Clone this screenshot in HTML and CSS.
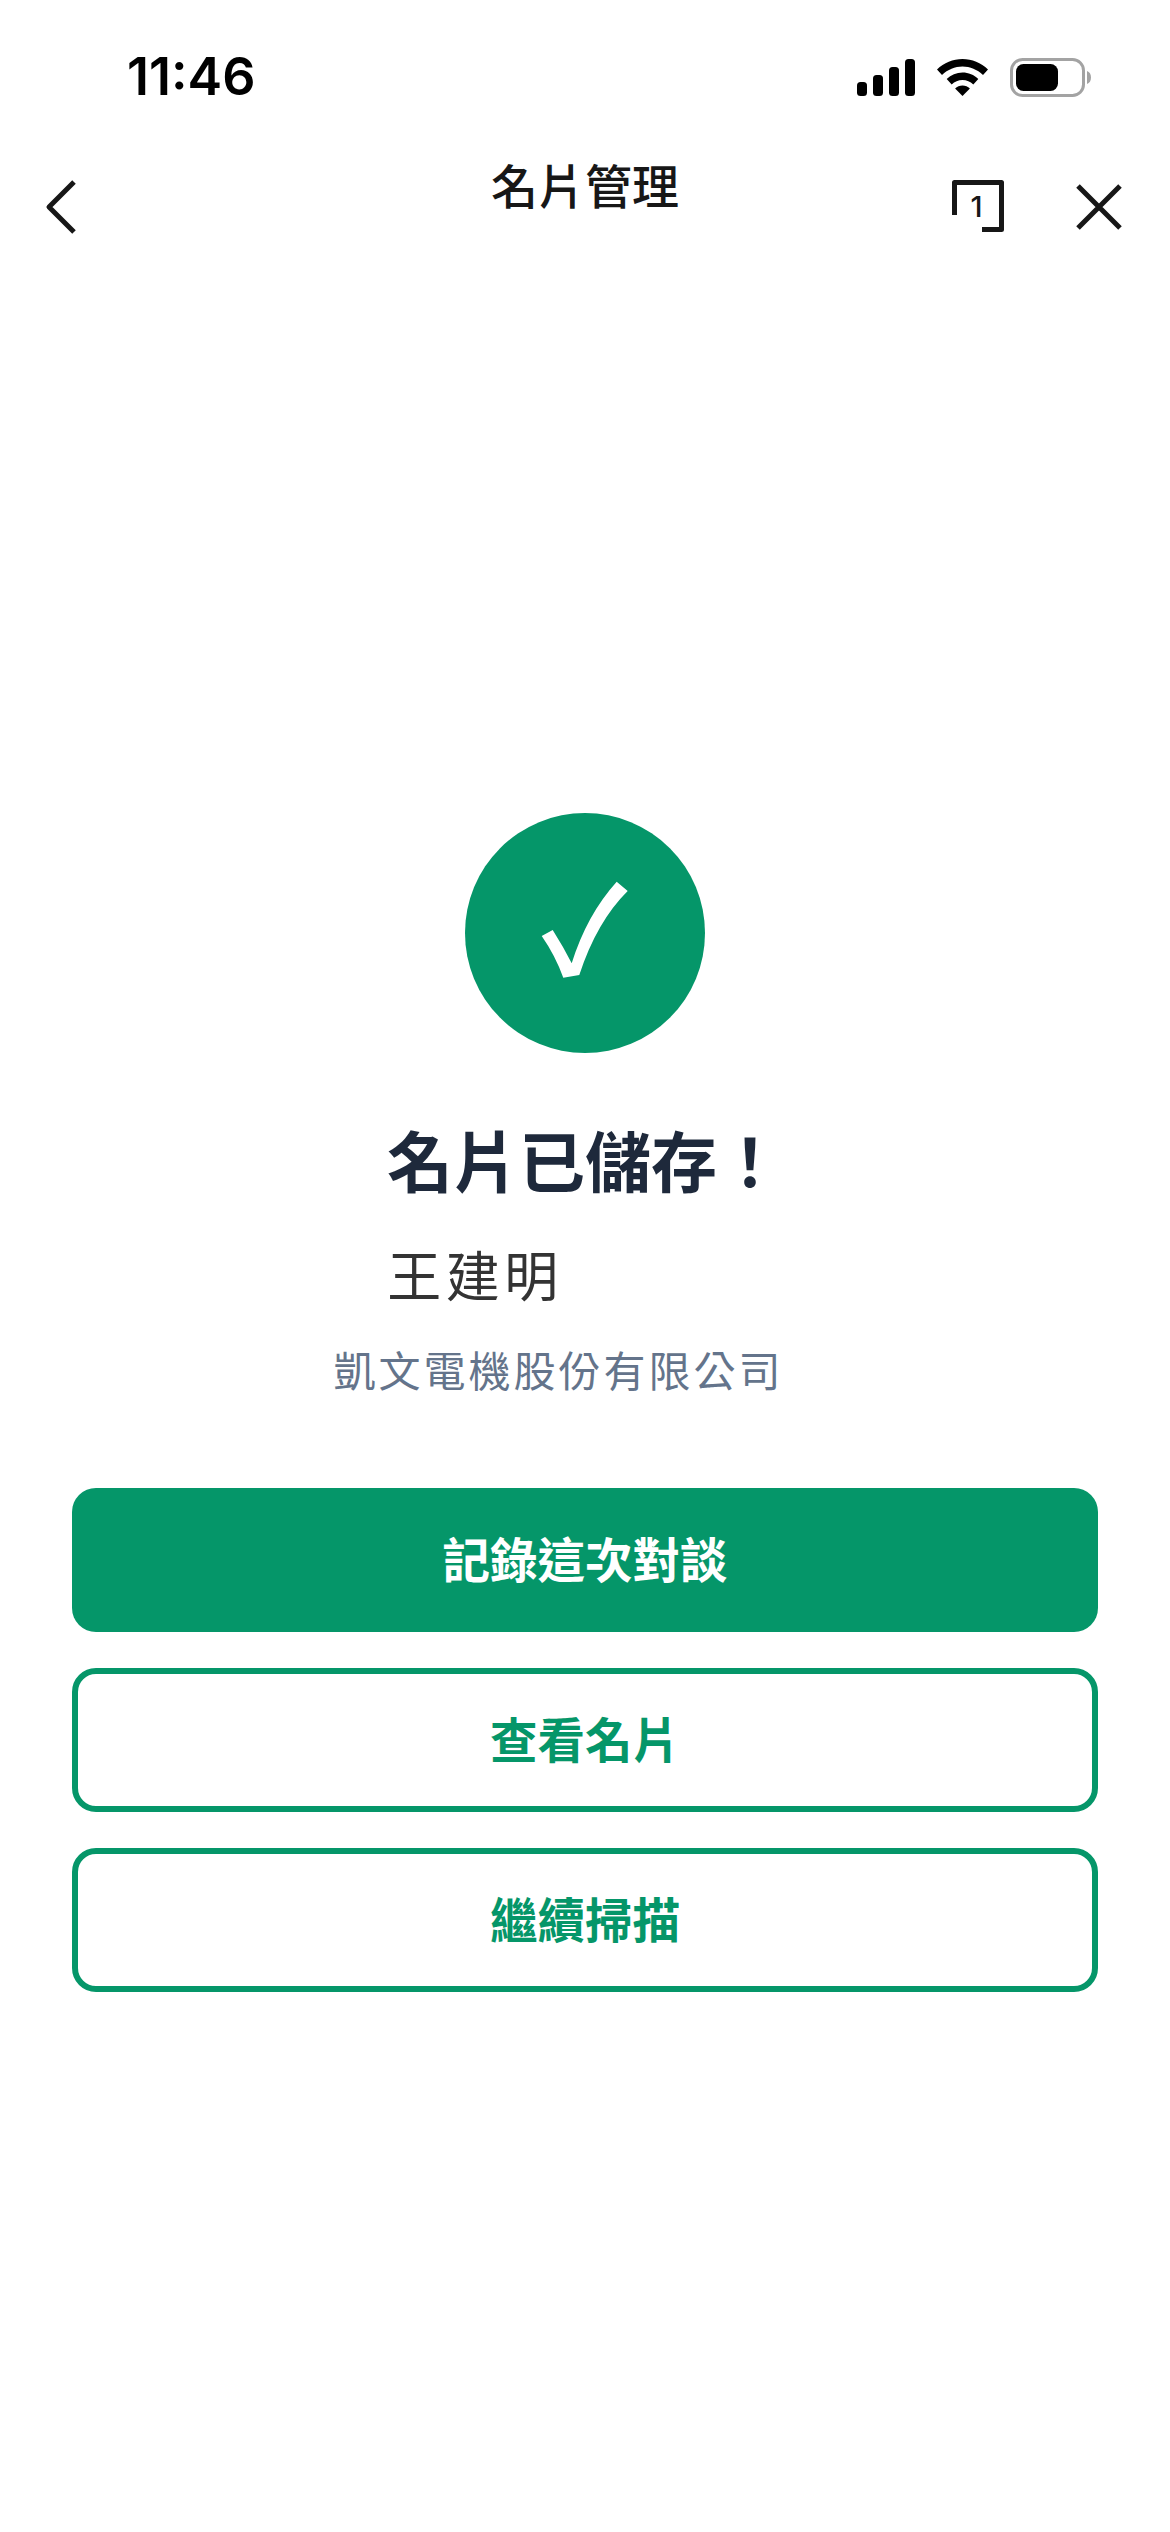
FILE: index.html
```html
<!DOCTYPE html>
<html lang="zh-Hant">
<head>
<meta charset="utf-8">
<title>名片管理</title>
<link rel="stylesheet" href="styles.css">
</head>
<body>
<div class="screen">
  <header class="status">
    <span class="time">11:46</span>
    <div class="status-icons">
      <svg class="signal" width="58" height="37" viewBox="0 0 58 37"><rect x="0" y="23" width="10" height="14" rx="3.5"/><rect x="16" y="16" width="10" height="21" rx="3.5"/><rect x="32" y="8" width="10" height="29" rx="3.5"/><rect x="48" y="0" width="10" height="37" rx="3.5"/></svg>
      <svg class="wifi" width="51" height="37" viewBox="0 0 51 37"><path d="M25.5 0C35 0 44 3.8 51 10.5l-5 5.5C40.300 10.500 33 7.500 25.500 7.500S10.700 10.500 5 16L0 10.500C7 3.800 16 0 25.500 0Z"/><path d="M25.500 13.500c6 0 11.500 2.300 15.800 6.500l-5 5.400c-2.900-2.800-6.700-4.400-10.800-4.400s-7.900 1.600-10.800 4.400l-5-5.400C14 15.800 19.500 13.500 25.500 13.500Z"/><path d="M25.500 26.500c2.800 0 5.400 1 7.400 3L25.500 37l-7.400-7.500c2-2 4.600-3 7.400-3Z"/></svg>
      <svg class="battery" width="82" height="39" viewBox="0 0 82 39"><rect x="1.500" y="1.500" width="72" height="36" rx="11" fill="none" stroke="#a3a3a3" stroke-width="3"/><rect x="6" y="6" width="42" height="27" rx="7.500" fill="#000"/><path d="M77 13c2.500 .8 4 3.300 4 6.500s-1.500 5.700-4 6.500Z" fill="#a3a3a3"/></svg>
    </div>
  </header>

  <nav class="navbar">
    <svg class="back" width="32" height="54" viewBox="0 0 32 54"><path d="M29 2 4 27l25 25"/></svg>
    <h1 class="nav-title">名片管理</h1>
    <div class="nav-actions">
      <div class="tabs">
        <svg width="52" height="52" viewBox="0 0 52 52"><path d="M2.500 35V2.500h47v47H30"/></svg>
        <span class="tabs-count">1</span>
      </div>
      <svg class="close" width="46" height="46" viewBox="0 0 46 46"><path d="M2 2l42 42M44 2 2 44"/></svg>
    </div>
  </nav>

  <main class="content">
    <div class="badge">
      <svg class="check" width="88" height="98" viewBox="0 0 88 98"><path d="M0.700 55 11.700 49Q22.300 65.700 30.700 82.300 45.700 34 75.700 0.700L86.700 10Q55.700 40.700 38.300 94L22.300 96.700Q14 74 0.700 55Z"/></svg>
    </div>
    <h2 class="headline">名片已儲存！</h2>
    <p class="person">王建明</p>
    <p class="company">凱文電機股份有限公司</p>
    <div class="actions">
      <button class="btn btn-primary">記錄這次對談</button>
      <button class="btn btn-outline">查看名片</button>
      <button class="btn btn-outline">繼續掃描</button>
    </div>
  </main>
</div>
</body>
</html>
```
FILE: styles.css
```css
* { box-sizing: border-box; }
html, body { margin: 0; padding: 0; background: #fff; }
body { font-family: "Noto Sans CJK TC", "Noto Sans", sans-serif; }
.screen { width: 1170px; height: 2532px; overflow: hidden; display: flex; flex-direction: column; }

.status { height: 132px; display: flex; justify-content: space-between; align-items: flex-start; padding: 58px 78px 0 127px; }
.time { font-family: Inter, sans-serif; font-weight: 600; font-size: 52px; line-height: 38px; color: #000; }
.status-icons { display: flex; align-items: flex-start; gap: 22px; }
.signal, .wifi { margin-top: 1px; fill: #000; }

.navbar { height: 120px; position: relative; display: flex; align-items: flex-start; justify-content: space-between; padding: 48px 48px 0 45px; }
.back path, .tabs path, .close path { fill: none; stroke: #171717; stroke-width: 5; stroke-linejoin: round; }
.nav-title { position: absolute; left: 0; right: 0; top: 18px; margin: 0; text-align: center; font-size: 47px; font-weight: 500; line-height: 68px; color: #171717; }
.nav-actions { display: flex; align-items: flex-start; gap: 72px; }
.tabs { position: relative; width: 52px; height: 52px; }
.tabs-count { position: absolute; left: 0; right: 3px; top: 12px; text-align: center; font-family: Inter, sans-serif; font-size: 29px; font-weight: 500; line-height: 30px; color: #171717; }
.close { margin-top: 4px; }

.content { display: flex; flex-direction: column; align-items: center; padding-top: 561px; }
.badge { width: 240px; height: 240px; border-radius: 50%; background: #059669; display: flex; align-items: center; justify-content: center; }
.check { fill: #fff; margin-bottom: 6px; }
.headline { margin: 61px 0 0; font-size: 66px; font-weight: 700; line-height: 88px; color: #1e293b; }
.person { margin: 36px 0 0; padding-right: 220px; font-size: 54px; line-height: 72px; letter-spacing: 4.500px; color: #333; }
.company { margin: 29px 0 0; padding-right: 53px; font-size: 42px; line-height: 60px; letter-spacing: 3px; color: #64748b; }
.actions { width: 1026px; margin-top: 89px; display: flex; flex-direction: column; gap: 36px; }
.btn { height: 144px; border-radius: 24px; font-family: inherit; font-size: 47.500px; font-weight: 700; padding: 0 0 6px; }
.btn-primary { background: #059669; color: #fff; border: 0; }
.btn-outline { background: #fff; color: #059669; border: 6px solid #059669; }
```
